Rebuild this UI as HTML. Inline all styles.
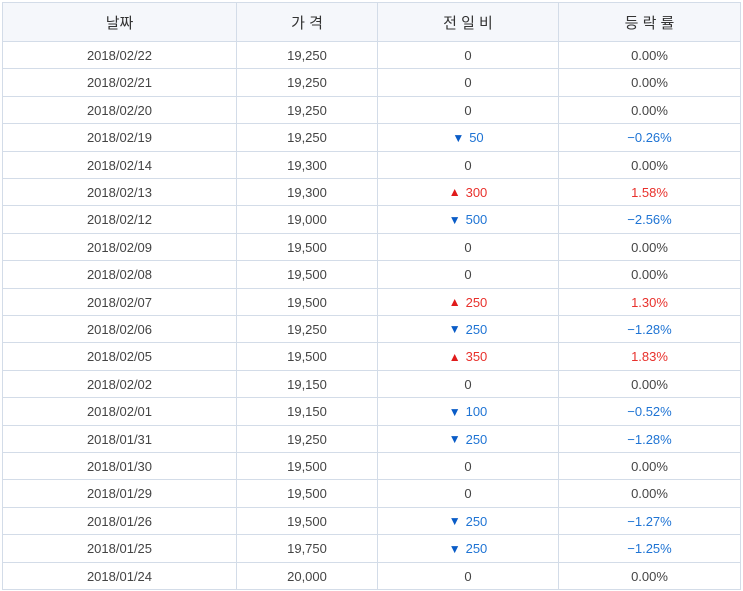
<!DOCTYPE html>
<html><head><meta charset="utf-8"><style>
body{margin:0;background:#fff;width:743px;height:591px;overflow:hidden;font-family:"Liberation Sans","Noto Sans CJK KR",sans-serif;}
.t{position:absolute;left:2px;top:2px;width:739px;height:588px;border:1px solid #d3dce8;box-sizing:border-box;}
.r{position:absolute;left:0;width:737px;border-bottom:1px solid #d3dce8;box-sizing:border-box;}
.c{position:absolute;top:0;height:100%;display:flex;align-items:center;justify-content:center;font-size:13px;color:#444;border-right:1px solid #d3dce8;box-sizing:border-box;}
.h{background:#f5f7fb;}
.h .c{font-size:15px;color:#333;}
.c1{left:0;width:234px}.c2{left:234px;width:141px}.c3{left:375px;width:181px}.c4{left:556px;width:181px;border-right:none}
.u{color:#e8312c}.d{color:#1f74d4}
.u b{color:#e01b1b;font-weight:normal;font-size:12px;margin-right:5px}
.d b{color:#0a5cc7;font-weight:normal;font-size:12px;margin-right:5px}
</style></head><body><div class="t">
<div class="r h" style="top:0;height:39px"><div class="c c1">날짜</div><div class="c c2">가 격</div><div class="c c3">전 일 비</div><div class="c c4">등 락 률</div></div>
<div class="r" style="top:39px;height:27px"><div class="c c1">2018/02/22</div><div class="c c2">19,250</div><div class="c c3">0</div><div class="c c4">0.00%</div></div>
<div class="r" style="top:66px;height:28px"><div class="c c1">2018/02/21</div><div class="c c2">19,250</div><div class="c c3">0</div><div class="c c4">0.00%</div></div>
<div class="r" style="top:94px;height:27px"><div class="c c1">2018/02/20</div><div class="c c2">19,250</div><div class="c c3">0</div><div class="c c4">0.00%</div></div>
<div class="r" style="top:121px;height:28px"><div class="c c1">2018/02/19</div><div class="c c2">19,250</div><div class="c c3 d"><b>▼</b>50</div><div class="c c4 d">−0.26%</div></div>
<div class="r" style="top:149px;height:27px"><div class="c c1">2018/02/14</div><div class="c c2">19,300</div><div class="c c3">0</div><div class="c c4">0.00%</div></div>
<div class="r" style="top:176px;height:27px"><div class="c c1">2018/02/13</div><div class="c c2">19,300</div><div class="c c3 u"><b>▲</b>300</div><div class="c c4 u">1.58%</div></div>
<div class="r" style="top:203px;height:28px"><div class="c c1">2018/02/12</div><div class="c c2">19,000</div><div class="c c3 d"><b>▼</b>500</div><div class="c c4 d">−2.56%</div></div>
<div class="r" style="top:231px;height:27px"><div class="c c1">2018/02/09</div><div class="c c2">19,500</div><div class="c c3">0</div><div class="c c4">0.00%</div></div>
<div class="r" style="top:258px;height:28px"><div class="c c1">2018/02/08</div><div class="c c2">19,500</div><div class="c c3">0</div><div class="c c4">0.00%</div></div>
<div class="r" style="top:286px;height:27px"><div class="c c1">2018/02/07</div><div class="c c2">19,500</div><div class="c c3 u"><b>▲</b>250</div><div class="c c4 u">1.30%</div></div>
<div class="r" style="top:313px;height:27px"><div class="c c1">2018/02/06</div><div class="c c2">19,250</div><div class="c c3 d"><b>▼</b>250</div><div class="c c4 d">−1.28%</div></div>
<div class="r" style="top:340px;height:28px"><div class="c c1">2018/02/05</div><div class="c c2">19,500</div><div class="c c3 u"><b>▲</b>350</div><div class="c c4 u">1.83%</div></div>
<div class="r" style="top:368px;height:27px"><div class="c c1">2018/02/02</div><div class="c c2">19,150</div><div class="c c3">0</div><div class="c c4">0.00%</div></div>
<div class="r" style="top:395px;height:28px"><div class="c c1">2018/02/01</div><div class="c c2">19,150</div><div class="c c3 d"><b>▼</b>100</div><div class="c c4 d">−0.52%</div></div>
<div class="r" style="top:423px;height:27px"><div class="c c1">2018/01/31</div><div class="c c2">19,250</div><div class="c c3 d"><b>▼</b>250</div><div class="c c4 d">−1.28%</div></div>
<div class="r" style="top:450px;height:27px"><div class="c c1">2018/01/30</div><div class="c c2">19,500</div><div class="c c3">0</div><div class="c c4">0.00%</div></div>
<div class="r" style="top:477px;height:28px"><div class="c c1">2018/01/29</div><div class="c c2">19,500</div><div class="c c3">0</div><div class="c c4">0.00%</div></div>
<div class="r" style="top:505px;height:27px"><div class="c c1">2018/01/26</div><div class="c c2">19,500</div><div class="c c3 d"><b>▼</b>250</div><div class="c c4 d">−1.27%</div></div>
<div class="r" style="top:532px;height:28px"><div class="c c1">2018/01/25</div><div class="c c2">19,750</div><div class="c c3 d"><b>▼</b>250</div><div class="c c4 d">−1.25%</div></div>
<div class="r" style="top:560px;height:26px;border-bottom:none"><div class="c c1">2018/01/24</div><div class="c c2">20,000</div><div class="c c3">0</div><div class="c c4">0.00%</div></div>
</div></body></html>
